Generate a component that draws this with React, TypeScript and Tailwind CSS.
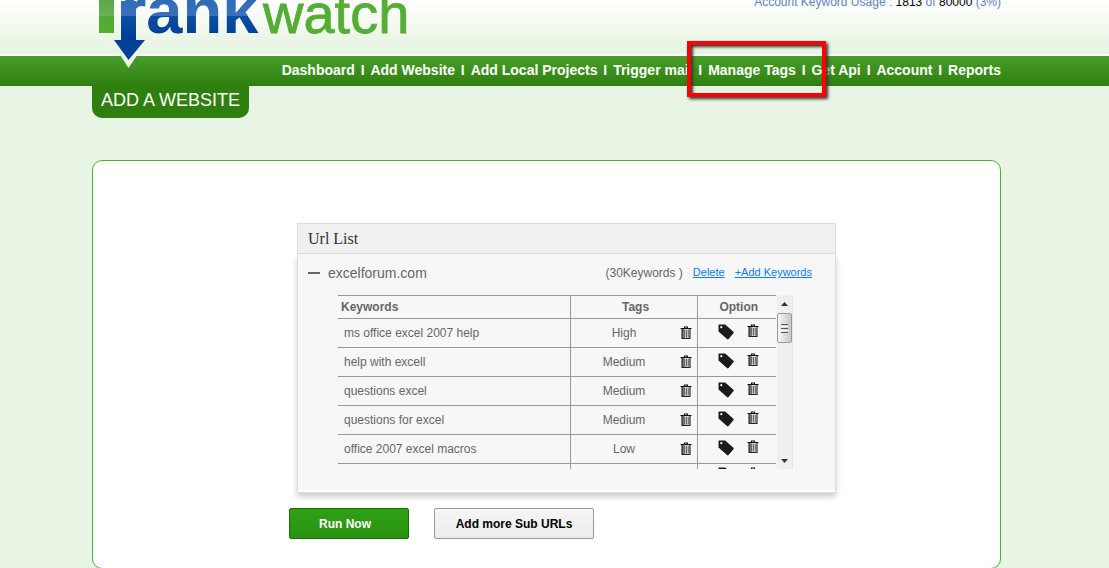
import { clsx } from "clsx";

const navItems = [
  "Dashboard",
  "Add Website",
  "Add Local Projects",
  "Trigger mail",
  "Manage Tags",
  "Get Api",
  "Account",
  "Reports",
];

const keywords = [
  { name: "ms office excel 2007 help", tag: "High" },
  { name: "help with excell", tag: "Medium" },
  { name: "questions excel", tag: "Medium" },
  { name: "questions for excel", tag: "Medium" },
  { name: "office 2007 excel macros", tag: "Low" },
  { name: "", tag: "" },
];

function Logo() {
  return (
    <svg width="330" height="72" viewBox="0 0 330 72" role="img" aria-label="rankwatch">
      <defs>
        <linearGradient id="blue" gradientUnits="userSpaceOnUse" x1="0" y1="0" x2="0" y2="62">
          <stop offset="0" stopColor="#2f6cb8" />
          <stop offset="0.25" stopColor="#3a70bb" />
          <stop offset="0.26" stopColor="#0d4da3" />
          <stop offset="0.6" stopColor="#003f94" />
          <stop offset="1" stopColor="#00429c" />
        </linearGradient>
        <linearGradient id="green" gradientUnits="userSpaceOnUse" x1="0" y1="0" x2="0" y2="33">
          <stop offset="0" stopColor="#5aa846" />
          <stop offset="0.48" stopColor="#6bb257" />
          <stop offset="0.49" stopColor="#52a935" />
          <stop offset="1" stopColor="#56ae36" />
        </linearGradient>
      </defs>
      <path d="M16 36h42L36.500 68 16 36z" fill="#e9f5e4" />
      <path d="M7 0h15v33H7z" fill="url(#green)" />
      <path d="M29 1h15v39h9L36.500 60 22 40h7z" fill="url(#blue)" />
      <text x="29" y="33" fontSize="65" fontWeight="bold" fill="url(#blue)">
        rank
      </text>
      <text x="171" y="33" fontSize="56" fill="#54ad35" stroke="#54ad35" strokeWidth="0.800">
        watch
      </text>
    </svg>
  );
}

function TrashIcon() {
  return (
    <svg width="12" height="14" viewBox="0 0 12 14" aria-hidden="true">
      <path d="M2 3h8v10H2z" fill="#d8d8d8" />
      <path d="M2 3h2.500v9H2z" fill="#777" />
      <path d="M.5 2.500h11M4.500 2V1h3v1" stroke="#111" strokeWidth="1.100" fill="none" />
      <path d="M2 3v9.500h8V3" stroke="#222" strokeWidth="1.100" fill="none" />
      <path d="M4.700 4v7.500M6.500 4v7.500M8.300 4v7.500" stroke="#333" strokeWidth="0.700" />
    </svg>
  );
}

function TagIcon() {
  return (
    <svg width="16" height="16" viewBox="0 0 16 16" aria-hidden="true">
      <path
        fillRule="evenodd"
        d="M1 .5h6.200l8.200 7.300c.5.500.5 1 0 1.500L10.600 15c-.5.500-1 .5-1.600 0L.5 7.500V1c0-.3.200-.5.500-.5zM3.300 2.100a1.100 1.100 0 100 2.200 1.100 1.100 0 000-2.200z"
        fill="#1b1b1b"
      />
    </svg>
  );
}

function Header() {
  return (
    <header>
      <div className="h-14 border-b-2 border-white bg-linear-to-b from-white to-[#e9f5e4] to-80% pr-4">
        <div className="mx-auto flex h-full max-w-[909px] items-start justify-between">
          <div className="relative z-10">
            <Logo />
          </div>
          <p className="-mt-1.5 text-xs leading-4 text-[#5f82bd]">
            Account Keyword Usage : <span className="text-black">1813</span> of{" "}
            <span className="text-black">80000</span> (3%)
          </p>
        </div>
      </div>
      <div className="h-[30px] bg-linear-to-b from-[#489f27] to-[#2f7f0f] pr-4">
        <nav className="relative mx-auto flex h-full max-w-[909px] items-center justify-end pb-0.5 text-sm font-bold text-white">
          {navItems.map((item, i) => (
            <span key={item} className="whitespace-pre">
              {i > 0 && <span className="px-0.5"> I </span>}
              <a href="#">{item}</a>
            </span>
          ))}
          <div className="pointer-events-none absolute -top-[15px] right-[175px] h-14 w-[139px] border-4 border-[#fe0000] shadow-[2px_2px_3px_#333,inset_2px_2px_3px_#333]" />
        </nav>
      </div>
    </header>
  );
}

function KeywordTable() {
  return (
    <div className="mr-[42px] ml-10 flex h-[174px] overflow-hidden">
      <table className="w-full table-fixed self-start border-t border-[#999] text-xs">
        <colgroup>
          <col />
          <col className="w-[127px]" />
          <col className="w-[79px]" />
        </colgroup>
        <thead>
          <tr className="h-[23px] border-b border-[#999]">
            <th className="pl-[3px] text-left">Keywords</th>
            <th className="border-x border-[#999] pl-1">Tags</th>
            <th className="pl-1">Option</th>
          </tr>
        </thead>
        <tbody>
          {keywords.map((keyword) => (
            <tr key={keyword.name} className="h-[29px] border-b border-[#999] last:h-[25px]">
              <td className="pl-1.5">{keyword.name}</td>
              <td className="border-x border-[#999]">
                <div className="flex items-center pr-[5px]">
                  <span className="flex-1 pr-0.5 text-center">{keyword.tag}</span>
                  <button type="button" aria-label="Remove tag">
                    <TrashIcon />
                  </button>
                </div>
              </td>
              <td>
                <div className="flex items-start gap-[13px] pb-0.5 pl-5">
                  <button type="button" aria-label="Edit tag">
                    <TagIcon />
                  </button>
                  <button type="button" aria-label="Delete keyword">
                    <TrashIcon />
                  </button>
                </div>
              </td>
            </tr>
          ))}
        </tbody>
      </table>
      <div className="ml-px flex w-4 shrink-0 flex-col items-center border-r border-[#e6e6e6] bg-[#efefef]">
        <svg width="7" height="18" viewBox="0 0 7 18" className="shrink-0">
          <path d="M0 11l3.500-4L7 11z" fill="#333" />
        </svg>
        <div className="flex h-[30px] w-[15px] shrink-0 flex-col items-center justify-center gap-px rounded-xs border border-[#999] bg-linear-to-r from-[#f6f6f6] to-[#c8c8c8]">
          <span className="h-px w-[7px] bg-[#555]" />
          <span className="h-px w-[7px] bg-white" />
          <span className="h-px w-[7px] bg-[#555]" />
          <span className="h-px w-[7px] bg-white" />
          <span className="h-px w-[7px] bg-[#555]" />
        </div>
        <svg width="7" height="16" viewBox="0 0 7 16" className="mt-auto shrink-0">
          <path d="M0 6h7l-3.500 4z" fill="#333" />
        </svg>
      </div>
    </div>
  );
}

function UrlList() {
  return (
    <section className="w-[539px] text-[#666]">
      <h2 className="flex h-[31px] items-center border border-[#ddd] bg-[#f0f0f0] pl-2.5 font-['Liberation_Serif',serif] text-base text-[#333]">
        Url List
      </h2>
      <div className="border-x border-b border-[#ddd] bg-[#f7f7f7] pb-[23px] shadow-[0_4px_6px_rgba(0,0,0,0.2),inset_0_-2px_0_#fff]">
        <div className="flex h-[41px] items-center pr-[23px] pb-1 pl-2.5">
          <button type="button" aria-label="Collapse" className="mr-2 h-0.5 w-3 bg-[#666]" />
          <span className="text-sm">excelforum.com</span>
          <span className="mr-2.5 ml-auto text-xs">(30Keywords )</span>
          <a href="#" className="mr-2.5 text-[11px] text-[#0a7cff] underline">
            Delete
          </a>
          <a href="#" className="text-[11px] text-[#0a7cff] underline">
            +Add Keywords
          </a>
        </div>
        <KeywordTable />
      </div>
    </section>
  );
}

function ActionButton({ label, primary }: { label: string; primary?: boolean }) {
  return (
    <button
      type="button"
      className={clsx(
        "h-[31px] rounded-xs border text-xs font-bold",
        primary
          ? "w-[120px] border-[#1b6e08] bg-linear-to-b from-[#2fa016] to-[#28920f] pr-2 text-white"
          : "w-40 border-[#999] bg-linear-to-b from-[#f6f6f6] to-[#ececec] text-black",
      )}
    >
      {label}
    </button>
  );
}

export default function App() {
  return (
    <div className="min-h-screen overflow-hidden bg-[#e9f5e4] font-['Liberation_Sans',Arial,sans-serif]">
      <Header />
      <div className="pr-4">
        <main className="mx-auto max-w-[909px]">
          <h1 className="flex h-8 w-[157px] items-center justify-center rounded-b-[10px] bg-[#2f7f0f] pb-1 text-lg text-white">
            ADD A WEBSITE
          </h1>
          <div className="mt-[42px] rounded-[10px] border border-[#4fae33] bg-white pt-[62px] pb-[29px]">
            <div className="ml-[204px]">
              <UrlList />
            </div>
            <div className="mt-[15px] ml-[196px] flex gap-[25px]">
              <ActionButton label="Run Now" primary />
              <ActionButton label="Add more Sub URLs" />
            </div>
          </div>
        </main>
      </div>
    </div>
  );
}
